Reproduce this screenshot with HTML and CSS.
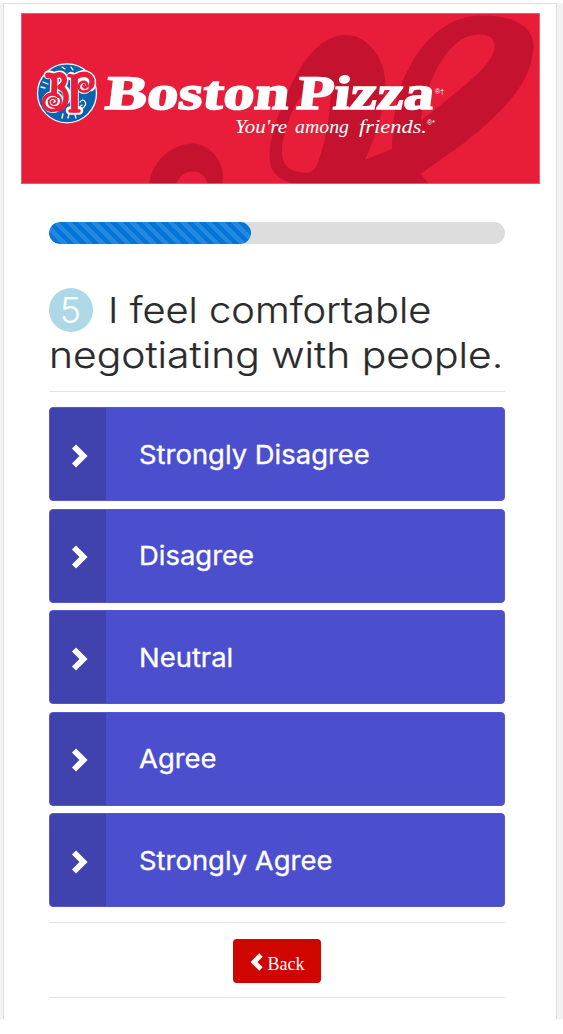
FILE: index.html
```html
<!DOCTYPE html>
<html lang="en">
<head>
<meta charset="utf-8">
<title>Boston Pizza Survey</title>
<link rel="stylesheet" href="styles.css">
</head>
<body>
<div class="page">
<main class="card">
  <svg class="banner" viewBox="21 13 519 171" role="img" aria-label="Boston Pizza">
    <rect x="20" y="13" width="520" height="171" fill="#e71d39"/>
    <g fill="#c4122f" fill-rule="evenodd">
      <path d="M149.500 184C151 163 171 143.500 193 143.500C212 144 227 166 222 184H208C203 167 183 167 176 184Z"/>
      <path d="M293 184C273 177 268 168 270 149C272 129 286 92 298 72C312 48 328 35 346 35C368 35 388 61 385 89C383 118 374 139 365 160L392 149C393 118 396 90 408 70C425 35 452 16 481 15.500C518 15 537 30 533 52C530 86 496 118 464 143L420.500 174L429 184ZM282 150C283 130 296 92 318 79C329 75 332 82 331 94C329 125 323 151 317 165C313 174 307 173 302 172.500C288 171 281 164 282 150ZM421 121C425 85 447 35 478 34.500C494 34 498 43 492 56C484 72 449 98 421 121Z"/>
    </g>
    <g>
      <circle cx="67" cy="93.300" r="29.500" fill="#0b63ae" stroke="#fff" stroke-width="1.300"/>
      <g fill="none" stroke-linecap="round" stroke-linejoin="round">
        <g stroke="#fff">
          <path stroke-width="8.500" d="M48 75Q54 74 54.500 80L54 93M55 76C64 71 68 82 60 87C69 90 67 96 66 100"/>
          <path stroke-width="8.500" d="M71 76L74.500 78V109M70 110.500H79M76 77C87 70 95 78 91 87"/>
        </g>
        <circle cx="53" cy="102" r="11" fill="#fff"/>
        <circle cx="84" cy="86" r="8" fill="#fff"/>
        <g stroke="#e71d39">
          <path stroke-width="5.800" d="M48 75.500Q54 75 54.500 80L54 92"/>
          <path stroke-width="5.500" d="M55 76C64 71 68 82 60 87C69 91 68 107 58 109"/>
          <path stroke-width="3.600" d="M58 109C50 113 42 108 44 100C46 94 54 92 58 96"/>
          <path stroke-width="2" d="M57 95C63 98 62 107 55 107C47 107 47 98 53 98C58 98 58 104 53.500 104C51 103 51 101 53 101"/>
          <path stroke-width="6.800" d="M74.500 78V109"/>
          <path stroke-width="3.500" d="M69 75.500L76 77M70 111H79"/>
          <path stroke-width="5.500" d="M76 77C87 70 95 78 91 86"/>
          <path stroke-width="2.600" d="M91.500 86C88 95 77 92 79 85.500C81 80 88 81 87 86C85 89 82 87 84 85"/>
        </g>
        <path stroke="#fff" stroke-width="1.300" d="M80 102C83 97 88 103 84 107C81 110 78 107 82 105M62 67L65 69M71 67L73 70M62 118L63 114M68 118L69 114M76 118L75 115M41 87L45 88M43 82L48 84"/>
      </g>
    </g>
    <g fill="#fff" class="wordmark">
      <text transform="translate(104 108.800) skewX(-7)" textLength="184" lengthAdjust="spacingAndGlyphs">Boston</text>
      <text transform="translate(295.500 108.800) skewX(-7)" textLength="137" lengthAdjust="spacingAndGlyphs">Pizza</text>
    </g>
    <g fill="#fff" class="tagline">
      <text x="235" y="133" textLength="52" lengthAdjust="spacingAndGlyphs">You're</text>
      <text x="295" y="133" textLength="54" lengthAdjust="spacingAndGlyphs">among</text>
      <text x="359" y="133" textLength="68" lengthAdjust="spacingAndGlyphs">friends.</text>
      <text class="mark" x="427" y="125">®*</text>
      <text class="mark" x="435" y="94">®†</text>
    </g>
    <rect x="21.300" y="13.300" width="518.400" height="170.300" fill="none" stroke="#f0868f" stroke-width=".6"/>
  </svg>

  <section class="survey">
    <div class="progress"><div class="progress-fill" style="width:44.500%"></div></div>
    <h1 class="question"><span class="number">5</span><span class="line-one">I feel comfortable</span><br><span class="line-two">negotiating with people.</span></h1>
    <div class="answers">
      <button class="answer"><span class="arrow"><svg viewBox="0 0 18 24"><path d="M3 2.500L12.500 12L3 21.500"/></svg></span><span class="label">Strongly Disagree</span></button>
      <button class="answer"><span class="arrow"><svg viewBox="0 0 18 24"><path d="M3 2.500L12.500 12L3 21.500"/></svg></span><span class="label">Disagree</span></button>
      <button class="answer"><span class="arrow"><svg viewBox="0 0 18 24"><path d="M3 2.500L12.500 12L3 21.500"/></svg></span><span class="label">Neutral</span></button>
      <button class="answer"><span class="arrow"><svg viewBox="0 0 18 24"><path d="M3 2.500L12.500 12L3 21.500"/></svg></span><span class="label">Agree</span></button>
      <button class="answer"><span class="arrow"><svg viewBox="0 0 18 24"><path d="M3 2.500L12.500 12L3 21.500"/></svg></span><span class="label">Strongly Agree</span></button>
    </div>
    <div class="actions">
      <button class="back"><svg viewBox="0 0 12 18"><path d="M10 2L3 9L10 16"/></svg><span>Back</span></button>
    </div>
  </section>
</main>
</div>
</body>
</html>
```

FILE: styles.css
```css
* { box-sizing: border-box; }
body { margin: 0; background: #fff; font-family: Inter, "Open Sans", sans-serif; }
.page {
  width: 563px;
  height: 1016px;
  margin-top: 3px;
  padding: 0 6px 0 3px;
  background: #f2f2f2;
}
.card {
  height: 100%;
  padding: 9px 16px 0 16.5px;
  background: #fff;
  border: 1px solid #e0e0e0;
  border-bottom: 0;
}
.banner { display: block; width: 519px; height: 171px; }
.wordmark text {
  font: bold 48px "Liberation Serif", serif;
  stroke: #fff;
  stroke-width: 1.6px;
}
.tagline text { font: italic 18px "Liberation Serif", serif; }
.tagline .mark { font: 7px "Liberation Sans", sans-serif; }
.survey { padding: 38px 35.5px 0 28px; }
.progress {
  height: 22px;
  border-radius: 11px;
  background: #ddd;
  overflow: hidden;
}
.progress-fill {
  height: 100%;
  border-radius: 11px;
  background: repeating-linear-gradient(45deg, #2488e0 0 4.5px, #0275d8 4.5px 9px);
}
.question {
  margin: 44px 0 0;
  padding-bottom: 14px;
  border-bottom: 1px solid #e4e4e4;
  font-size: 36px;
  font-weight: 300;
  line-height: 44.5px;
  color: #292b2c;
  white-space: nowrap;
}
.number {
  display: inline-block;
  width: 44px;
  height: 44px;
  margin-right: 16px;
  border-radius: 50%;
  background: #add8e6;
  color: #fff;
  text-align: center;
}
.line-one, .line-two {
  display: inline-block;
  transform-origin: left;
  -webkit-text-stroke: .2px #292b2c;
}
.line-one { transform: scaleX(1.106); margin-left: -1px; }
.line-two { transform: scaleX(1.133); }
.answers { display: grid; gap: 7.5px; padding: 15px 0; }
.answer {
  display: flex;
  height: 94px;
  padding: 0;
  border: 1px solid #5558cf;
  border-radius: 4px;
  background: #4b4fce;
  overflow: hidden;
  color: #fff;
  font: 400 26px Inter, sans-serif;
  align-items: stretch;
}
.arrow {
  display: flex;
  width: 56.5px;
  padding-left: 5px;
  align-items: center;
  justify-content: center;
  background: #4042ae;
}
.arrow svg { width: 18px; height: 24px; margin-top: 3px; }
.arrow path, .back path { fill: none; stroke: #fff; stroke-width: 5.8; }
.label {
  margin: auto 0 auto 33px;
  transform: scaleX(1.055);
  transform-origin: left;
  -webkit-text-stroke: .3px #fff;
}
.actions {
  display: flex;
  height: 76px;
  justify-content: center;
  align-items: center;
  padding-top: 2px;
  border: solid #e4e4e4;
  border-width: 1px 0;
}
.back {
  display: flex;
  width: 88px;
  height: 44px;
  padding: 7px 0 0 18px;
  gap: 5px;
  align-items: center;
  border: 0;
  border-radius: 4px;
  background: #cf0500;
  color: #fff;
  font: 18px "Liberation Serif", serif;
}
.back svg { width: 12px; height: 18px; margin-top: -6px; }
.back path { stroke-width: 4.8; }
```
